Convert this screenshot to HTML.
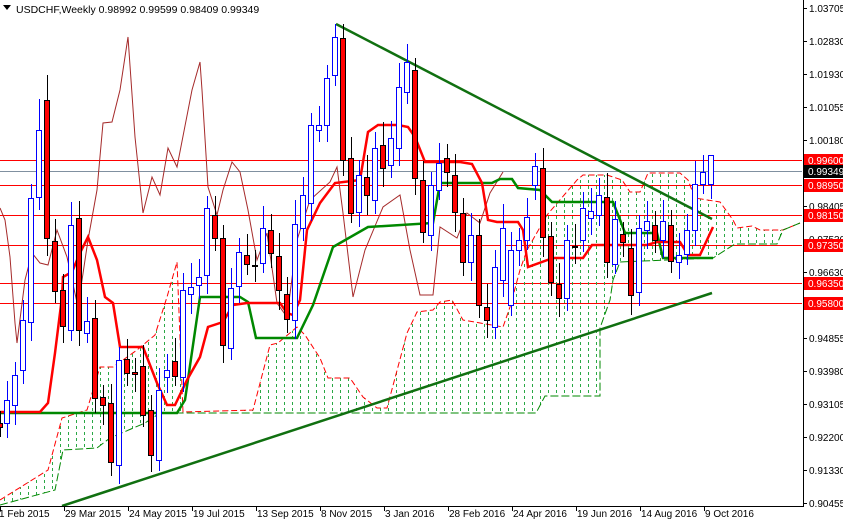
<!DOCTYPE html>
<html><head><meta charset="utf-8"><style>
html,body{margin:0;padding:0;background:#fff;}
#c{position:relative;width:843px;height:520px;overflow:hidden;font-family:"Liberation Sans",sans-serif;}
svg{position:absolute;left:0;top:0;}
</style></head><body><div id="c">
<svg id="s" width="843" height="520" viewBox="0 0 843 520" xmlns="http://www.w3.org/2000/svg">
<defs>
<pattern id="vd" x="0" y="0" width="8" height="520" patternUnits="userSpaceOnUse">
<line x1="4.5" y1="0" x2="4.5" y2="520" stroke="#2aa845" stroke-width="1" stroke-dasharray="3,3"/>
</pattern>
<clipPath id="cl"><rect x="0" y="0" width="802" height="506"/></clipPath>
</defs>
<g id="g" clip-path="url(#cl)"></g>
<line x1="803.5" y1="0" x2="803.5" y2="507" stroke="#000"/>
<line x1="0" y1="506.5" x2="804" y2="506.5" stroke="#000"/>
<g id="ax" font-size="10" fill="#000"></g>
<text x="16" y="13" font-size="10.5" fill="#000">USDCHF,Weekly  0.98992 0.99599 0.98409 0.99349</text>
<polygon points="3,5 11,5 7,10" fill="#000"/>
</svg>
</div>
<script>
var g=document.getElementById('g'),ax=document.getElementById('ax'),h='';
function pl(p,c,w,d){return '<polyline fill="none" stroke="'+c+'" stroke-width="'+w+'"'+(d?' stroke-dasharray="'+d+'"':'')+' points="'+p+'"/>';}
// horizontal lines
[[160,'#f00'],[185,'#f00'],[215,'#f00'],[245,'#f00'],[283,'#f00'],[303,'#f00']].forEach(function(l){h+='<line x1="0" x2="802" y1="'+(l[0]+.5)+'" y2="'+(l[0]+.5)+'" stroke="'+l[1]+'"/>';});
h+='<line x1="0" x2="802" y1="171.5" y2="171.5" stroke="#8090a0"/>';
// cloud
var up=[[0,500],[48,470],[62,418],[87,410],[100,367],[113,367],[123,360],[137,350],[155,335],[167,297],[177,262],[183,412],[253,410],[270,345],[278,343],[297,327],[305,335],[320,358],[328,378],[350,378],[363,397],[377,408],[387,408],[407,333],[417,312],[433,310],[440,302],[452,300],[463,320],[503,327],[510,307],[520,270],[527,250],[547,215],[577,180],[583,175],[607,175],[622,180],[630,192],[640,192],[648,173],[680,173],[688,180],[695,198],[720,202],[733,220],[737,228],[752,226],[760,230],[777,230],[783,230],[800,223]];
var lo=[[0,505],[55,490],[63,450],[97,448],[110,438],[145,423],[160,413],[536,413],[545,396],[600,396],[600,328],[610,300],[613,280],[620,262],[713,258],[735,244],[777,244],[783,230],[800,223]];
var poly=up.map(function(p){return p.join(',')}).join(' ')+' '+lo.slice().reverse().map(function(p){return p.join(',')}).join(' ');
h+='<polygon points="'+poly+'" fill="url(#vd)"/>';
h+=pl(up.map(function(p){return p.join(',')}).join(' '),'#f00',1,'6,3');
h+=pl(lo.map(function(p){return p.join(',')}).join(' '),'#080',1,'8,3');
// chikou
h+=pl('0,208 5,220 10,257 15,323 17,343 25,280 32,253 40,263 48,265 57,230 67,257 78,307 88,240 97,190 103,123 112,122 120,90 128,37 135,137 143,213 152,177 160,195 168,148 177,167 192,90 200,62 202,90 208,187 217,215 223,190 232,162 240,172 248,210 257,260 267,233 277,303 287,317 297,240 310,200 330,182 337,167 343,213 353,297 365,250 383,207 400,195 410,250 420,295 433,295 440,227 457,238 467,213 480,223 490,193 503,172','#a52a2a',1);
// kijun
h+=pl('0,413 177,413 185,400 200,297 240,297 248,302 256,338 297,338 313,305 333,247 368,227 433,223 440,183 492,183 500,179 512,179 518,188 540,190 552,202 613,202 622,225 625,233 657,233 663,258 713,258','#080',2.5);
// tenkan
h+=pl('0,412 40,412 48,403 55,353 62,297 63,277 72,272 80,253 88,237 97,260 105,297 113,303 120,347 143,347 157,383 167,405 175,405 187,380 200,357 208,327 223,322 233,305 247,303 280,303 287,313 293,315 300,300 307,230 320,203 335,183 360,180 368,132 378,125 398,125 408,127 415,137 425,162 460,162 472,164 482,183 488,220 497,222 518,222 523,230 528,267 553,258 583,258 592,245 647,245 657,242 680,242 688,255 700,255 713,227','#f00',2.5);
// trend lines
h+='<line x1="336" y1="24" x2="712" y2="219" stroke="#107010" stroke-width="2.5"/>';
h+='<line x1="62" y1="506" x2="712" y2="293" stroke="#107010" stroke-width="2.5"/>';
// candles x, open, close (y px)
var C=[[1,423,427],[8,423,400],[16,405,375],[24,370,320],[32,322,198],[40,197,130,99],[48,100,238,75],[56,241,291],[64,290,326],[72,330,225],[80,218,330],[88,333,321],[96,318,398],[104,397,405],[112,403,462],[120,465,360],[128,359,373],[136,372,374],[144,366,415],[152,410,455],[160,460,390],[168,377,370],[176,361,376],[184,377,290],[192,294,287],[200,285,277],[208,275,208],[216,215,238],[224,238,345],[232,348,288],[240,286,252],[248,255,264],[256,265,266],[264,263,228],[272,230,253],[280,256,290],[288,294,319],[296,320,224],[304,228,195],[312,203,125],[320,130,125],[328,125,78],[336,75,37,24],[344,38,160],[352,158,213],[360,212,175],[368,177,195],[376,200,148],[384,145,168],[392,165,138],[400,148,87],[408,92,62],[416,70,178],[424,180,232],[432,235,185],[440,190,163],[448,158,172],[456,175,212],[464,213,262],[472,262,235],[480,235,305],[488,307,320],[496,327,267],[504,280,228],[512,305,250],[520,250,240],[528,240,217],[536,185,166],[544,168,237],[552,236,282],[560,284,298],[568,298,240],[576,246,246],[584,240,208],[592,218,211],[600,215,195],[608,197,262],[616,264,219],[624,234,242],[632,248,295],[640,292,228],[648,230,221],[656,225,240],[664,240,221],[672,225,261],[680,262,255],[688,254,230],[696,230,184],[704,184,172],[712,184,155,160]];
C.forEach(function(k,i){var x=k[0]-1,o=k[1],c=k[2],bull=c<o,t=Math.min(o,c),b=Math.max(o,c);
var hi=k[3]||t-12-(i*7%13),lw=b+10+(i*5%11);var col=bull?'#00f':'#000';
h+='<line x1="'+(x+.5)+'" x2="'+(x+.5)+'" y1="'+hi+'" y2="'+lw+'" stroke="'+col+'"/>';
if(b-t<1)b=t+1;
h+='<rect x="'+(x-2.5)+'" y="'+(t+.5)+'" width="5" height="'+(b-t)+'" fill="'+(bull?'#fff':'#f00')+'" stroke="'+col+'"/>';});
g.innerHTML=h;
// axis
var a='',L=['1.03705','1.02830','1.01930','1.01055','1.00180','0.99305','0.98405','0.97530','0.96630','0.95755','0.94855','0.93980','0.93105','0.92200','0.91330','0.90455'];
L.forEach(function(s,i){var y=8+i*33;a+='<line x1="803" x2="807" y1="'+(y+.5)+'" y2="'+(y+.5)+'" stroke="#000"/><text x="809" y="'+(y+4)+'">'+s+'</text>';});
[[160,'0.99600','#f00'],[171,'0.99349','#000'],[185,'0.98950','#f00'],[215,'0.98150','#f00'],[245,'0.97350','#f00'],[283,'0.96350','#f00'],[303,'0.95800','#f00']].forEach(function(t){a+='<rect x="804" y="'+(t[0]-6)+'" width="39" height="13" fill="'+t[2]+'"/><text x="808" y="'+(t[0]+4)+'" fill="#fff">'+t[1]+'</text>';});
var D=['1 Feb 2015','29 Mar 2015','24 May 2015','19 Jul 2015','13 Sep 2015','8 Nov 2015','3 Jan 2016','28 Feb 2016','24 Apr 2016','19 Jun 2016','14 Aug 2016','9 Oct 2016'];
D.forEach(function(s,i){var x=i*64;a+='<line x1="'+(x+.5)+'" x2="'+(x+.5)+'" y1="506" y2="511" stroke="#000"/><text x="'+(i==0?-1:x+1)+'" y="517">'+s+'</text>';});
ax.innerHTML=a;
</script>
</body></html>
